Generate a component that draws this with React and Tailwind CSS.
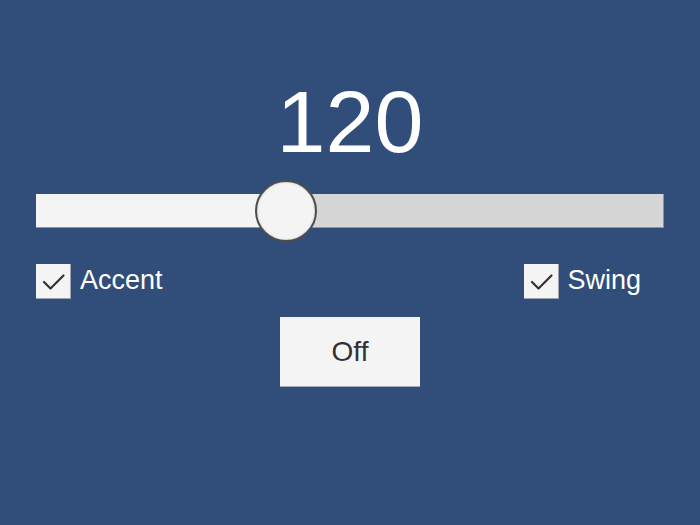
import React from "react";

function Check() {
  return (
    <div className="w-[35px] h-[35px] bg-[#f4f4f4] border-b border-r border-[#9aa3ae] flex-none">
      <svg width="35" height="35" viewBox="0 0 35 35">
        <polyline points="8,18 14.5,24.5 27.5,11.5" fill="none" stroke="#333333" strokeWidth="2.2" strokeLinecap="round" strokeLinejoin="round" />
      </svg>
    </div>
  );
}

export default function App() {
  return (
    <div className="w-[700px] h-[525px] bg-[#304e79] font-['Liberation_Sans',Arial,sans-serif] flex flex-col">
      <div className="pt-[78px] text-[88px] leading-[88px] text-center text-white">120</div>
      <div className="mt-[28px] mx-[36px] h-[34px] relative flex bg-[#d6d6d6] border-b border-r border-[#8a94a2]">
        <div className="w-[250px] h-full bg-[#f4f4f4]" />
        <div className="absolute left-[219px] top-[-14px] w-[62px] h-[62px] rounded-full bg-[#f4f4f4] border-2 border-[#4d4d4d] shadow-[inset_0_0_2px_rgba(0,0,0,0.25)]" />
      </div>
      <div className="mt-[36px] flex items-center pl-[36px]">
        <div className="flex items-center gap-[9px]">
          <Check />
          <span className="text-white text-[27px] leading-[31px] mb-[2px]">Accent</span>
        </div>
        <div className="ml-auto mr-[59px] flex items-center gap-[8px]">
          <Check />
          <span className="text-white text-[27px] leading-[31px] mb-[2px]">Swing</span>
        </div>
      </div>
      <button className="mt-[18px] mx-auto w-[140px] h-[70px] bg-[#f4f4f4] border-b border-[#a7adb5] flex items-center justify-center text-[#323232] text-[28px] leading-[32px] font-['Liberation_Sans',Arial,sans-serif]">
        Off
      </button>
    </div>
  );
}
